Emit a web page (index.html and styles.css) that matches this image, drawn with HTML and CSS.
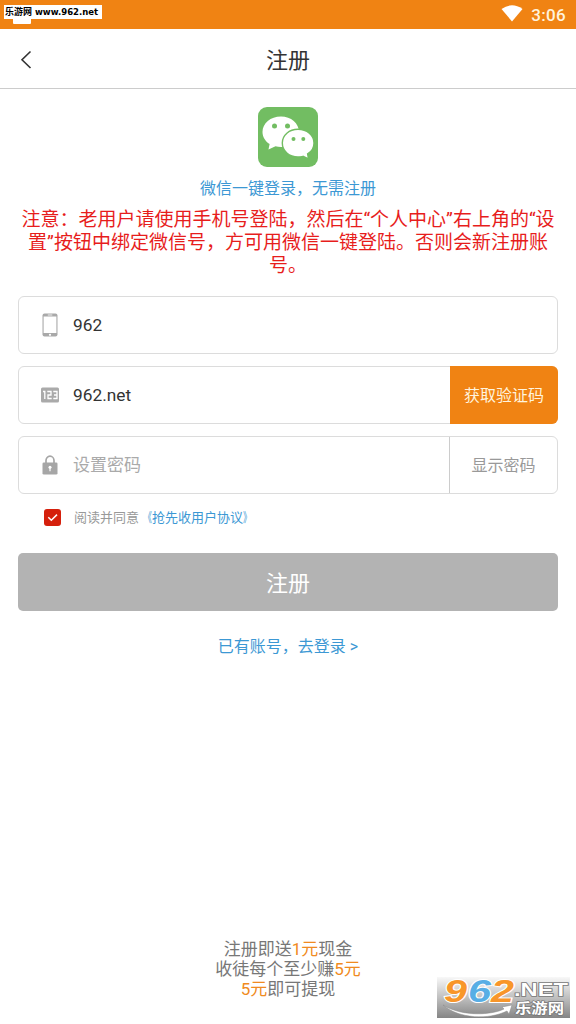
FILE: index.html
```html
<!DOCTYPE html>
<html lang="zh-CN">
<head>
<meta charset="utf-8">
<title>注册</title>
<link rel="stylesheet" href="styles.css">
</head>
<body>
<div class="screen">
  <header class="status">
    <span class="notice"></span>
    <span class="site-tag"><b class="site-cn">乐游网</b><b class="site-url">www.962.net</b></span>
    <svg class="wifi" width="22" height="17" viewBox="0 0 22 17"><path d="M.5 4Q11-3.500 21.500 4L11 16.500Z" fill="#fff"/></svg>
    <span class="clock">3:06</span>
  </header>
  <nav class="navbar">
    <svg class="back" width="12" height="20" viewBox="0 0 12 20"><path d="M10.500 1.500L2 9.800L10.500 18" fill="none" stroke="#333" stroke-width="1.600"/></svg>
    <h1 class="title">注册</h1>
  </nav>
  <main class="content">
    <svg class="wechat" width="60" height="60" viewBox="0 0 60 60">
      <rect width="60" height="60" rx="9" fill="#72bd62"/>
      <path d="M23 9.500C12.500 9.500 4.500 16.300 4.500 25C4.500 29.900 7.200 34.200 11.600 37L10.500 42.500L17.500 39.300C19.200 39.800 21 40 23 40C33.500 40 41 33.600 41 25C41 16.300 33 9.500 23 9.500Z" fill="#fff"/>
      <path d="M40 22.300C31.200 22.300 24.300 28.200 24.300 36C24.300 44 31.200 50 40 50C41.800 50 43.400 49.800 45 49.300L50.500 51.900L49.600 46.900C53.700 44.600 56 40.700 56 36C56 28.200 48.900 22.300 40 22.300Z" fill="#fff" stroke="#72bd62" stroke-width="1.400"/>
      <g fill="#72bd62"><circle cx="16.500" cy="19" r="2.500"/><circle cx="29.500" cy="19" r="2.500"/><circle cx="35.500" cy="32" r="2"/><circle cx="45.300" cy="32" r="2"/></g>
    </svg>
    <a class="wechat-link">微信一键登录，无需注册</a>
    <p class="warning">注意：老用户请使用手机号登陆，然后在“个人中心”右上角的“设<br>置”按钮中绑定微信号，方可用微信一键登陆。否则会新注册账<br>号。</p>
    <form class="form">
      <div class="field">
        <span class="icon"><svg width="16" height="24" viewBox="0 0 16 24"><rect x=".5" y=".5" width="15" height="23" rx="2" fill="#a9a9a9"/><rect x="1.600" y="3.500" width="12.800" height="16.500" fill="#fff"/><path d="M5.800 2h4.500" stroke="#eee"/><circle cx="8" cy="21.800" r="1.100" fill="#fff"/></svg></span>
        <span class="value">962</span>
      </div>
      <div class="field">
        <span class="icon"><svg width="18" height="16" viewBox="0 0 18 16"><rect y=".5" width="18" height="15" rx="1.500" fill="#aaa"/><path d="M2 4.500h1.800v7.500M6.300 4.500h3.700v3.500H7v3.500h3.700M12.300 4.500H16v7h-3.700M13 8h3" fill="none" stroke="#fff" stroke-width="1.300"/></svg></span>
        <span class="value">962.net</span>
        <span class="action code">获取验证码</span>
      </div>
      <div class="field">
        <span class="icon"><svg width="16" height="20" viewBox="0 0 16 20"><path d="M4 8V5.500a4 4.300 0 0 1 8 0V8" fill="none" stroke="#a6a6a6" stroke-width="1.700"/><rect x=".5" y="7.500" width="15" height="12" rx="1.300" fill="#a6a6a6"/><circle cx="8" cy="12.300" r="1.500" fill="#fff"/><path d="M8 12v4.300" stroke="#fff" stroke-width="1.200"/></svg></span>
        <span class="value placeholder">设置密码</span>
        <span class="action show">显示密码</span>
      </div>
      <div class="agree">
        <svg class="check" width="17" height="17" viewBox="0 0 17 17"><rect width="17" height="17" rx="3" fill="#d5200c"/><path d="M4.300 8.300L7.300 11.200L13 5.600" fill="none" stroke="#fff" stroke-width="1.500"/></svg>
        <span class="agree-text">阅读并同意</span><a class="terms"><span class="open">《</span>抢先收用户协议<span class="close">》</span></a>
      </div>
      <div class="submit">注册</div>
    </form>
    <a class="login">已有账号，去登录 &gt;</a>
  </main>
  <footer class="promo">注册即送<em>1元</em>现金<br>收徒每个至少赚<em>5元</em><br><em>5元</em>即可提现</footer>
  <svg class="watermark" width="133" height="41" viewBox="0 0 133 41">
    <defs><linearGradient id="shade" x1="0" y1="0" x2="0" y2="1"><stop offset="0" stop-color="#f8f8f8"/><stop offset=".5" stop-color="#c0c0c0"/><stop offset="1" stop-color="#858585"/></linearGradient></defs>
    <rect width="133" height="41" fill="url(#shade)"/>
    <g class="mark-num"><text x="7" y="25" textLength="23" lengthAdjust="spacingAndGlyphs" fill="#f8962a">9</text><text x="31" y="25" textLength="23" lengthAdjust="spacingAndGlyphs" fill="#58aee5">6</text><text x="54" y="25" textLength="23" lengthAdjust="spacingAndGlyphs" fill="#f8962a">2</text></g>
    <path d="M6 28C25 40 55 38 67 32L65 30L75 28L72 37L70 34C52 43 22 42 6 28Z" fill="#fff" stroke="#888" stroke-width=".5"/>
    <text class="mark-net" x="77" y="19" textLength="54" lengthAdjust="spacingAndGlyphs">.NET</text>
    <text class="mark-cn" x="78" y="36" textLength="49" lengthAdjust="spacingAndGlyphs">乐游网</text>
  </svg>
</div>
</body>
</html>
```
FILE: styles.css
```css
* { box-sizing: border-box; }
body { margin: 0; background: #fff; font-family: Roboto, "Noto Sans CJK SC", sans-serif; }
.screen { position: relative; width: 576px; height: 1024px; display: flex; flex-direction: column; overflow: hidden; }
.status { position: relative; flex: none; height: 29px; background: #f08313; display: flex; justify-content: flex-end; align-items: center; padding-right: 10px; gap: 8px; }
.wifi { margin-top: -2px; }
.clock { color: #fff3dd; font-size: 17px; font-weight: 500; line-height: 20px; letter-spacing: .3px; }
.notice { position: absolute; left: 13px; top: 15px; width: 18px; height: 9px; background: #fff; border-radius: 1px; }
.site-tag { position: absolute; left: 4px; top: 5px; width: 98px; height: 14px; background: #fff; color: #000; display: flex; align-items: center; gap: 3px; padding-left: 1px; white-space: nowrap; line-height: 14px; }
.site-cn { font-size: 9px; }
.site-url { font-family: "DejaVu Sans", sans-serif; font-size: 8.5px; }
.navbar { flex: none; height: 60px; border-bottom: 1px solid #ccc; display: grid; grid-template-columns: 60px 1fr 60px; align-items: center; }
.back { margin: 2px 0 0 20px; }
.title { margin: 0; text-align: center; font-size: 22px; font-weight: 400; line-height: 30px; color: #333; padding-top: 4px; }
.content { flex: 1; display: flex; flex-direction: column; align-items: center; padding: 18px 18px 0; }
.wechat { flex: none; }
.wechat-link { margin-top: 10px; font-size: 16px; line-height: 24px; color: #3c98d4; }
.warning { margin: 7px 0 0; font-size: 19px; line-height: 23px; color: #e71d1c; text-align: center; white-space: nowrap; }
.form { width: 540px; margin-top: 19px; display: flex; flex-direction: column; gap: 12px; }
.field { height: 58px; border: 1px solid #dcdcdc; border-radius: 6px; display: flex; align-items: center; }
.icon { width: 54px; padding-left: 7px; display: flex; justify-content: center; }
.value { flex: 1; font-size: 17.3px; line-height: 24px; color: #333; }
.placeholder { font-size: 17px; color: #aaa; }
.action { display: flex; align-items: center; justify-content: center; font-size: 16px; padding-bottom: 2px; }
.code { width: 108px; height: 58px; margin-right: -1px; background: #f08313; color: #fff3dd; border-radius: 0 6px 6px 0; }
.show { width: 108px; height: 56px; border-left: 1px solid #ccc; color: #999; }
.agree { height: 22px; display: flex; align-items: center; font-size: 13px; line-height: 18px; padding-left: 26px; }
.agree-text { margin: 1px 0 0 13px; color: #999; }
.terms { margin-top: 1px; color: #3c98d4; }
.open, .close { display: inline-block; transform: scaleX(.65); }
.open { transform-origin: right; }
.close { transform-origin: left; }
.submit { height: 58px; margin-top: 13px; padding-bottom: 2px; border-radius: 5px; background: #b3b3b3; color: #fff; font-size: 22px; display: flex; align-items: center; justify-content: center; }
.login { margin-top: 24px; font-size: 16px; line-height: 24px; color: #3c98d4; }
.promo { flex: none; text-align: center; font-size: 17px; line-height: 20px; color: #777; padding-bottom: 25px; }
.promo em { font-style: normal; color: #f08a20; }
.watermark { position: absolute; left: 437px; top: 977px; overflow: visible; }
.mark-num { font: italic 700 31px "Liberation Sans", sans-serif; stroke: #fff; stroke-width: 2px; paint-order: stroke; }
.mark-net { font: 700 18px "Liberation Sans", sans-serif; fill: #fff; stroke: #777; stroke-width: 1.5px; paint-order: stroke; }
.mark-cn { font: 700 14px "Noto Sans CJK SC", sans-serif; fill: #fff; stroke: #777; stroke-width: 1.5px; paint-order: stroke; }
```
